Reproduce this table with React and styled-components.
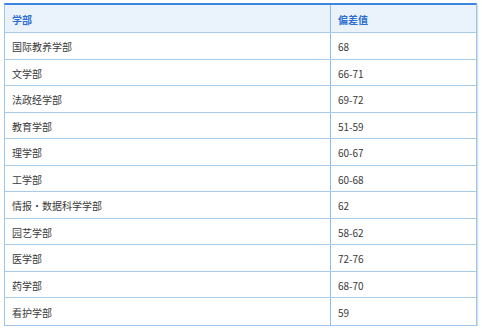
import React from "react";
import styled, { createGlobalStyle } from "styled-components";

const Global = createGlobalStyle`
  html, body { margin: 0; padding: 0; background: #fff; }
  body { font-family: "Noto Sans CJK SC", "Noto Sans", sans-serif; }
`;

const Table = styled.div`
  width: 473px;
  margin: 3px 0 0 4px;
  border: 1px solid #9fc6ea;
  border-top: 2px solid #3d86e0;
  box-sizing: border-box;
  box-shadow: 1px 1px 1px rgba(120, 170, 220, 0.35);
`;

const Row = styled.div`
  display: grid;
  grid-template-columns: 326px 1fr;
  height: ${(p) => (p.$head ? "28px" : "26.5px")};
  box-sizing: border-box;
  background: ${(p) => (p.$head ? "#eaf2fc" : "#fff")};
  border-bottom: ${(p) => (p.$last ? "none" : "1px solid #a9cbeb")};
`;

const Cell = styled.div`
  display: flex;
  align-items: center;
  padding: 2px 0 0 7px;
  box-sizing: border-box;
  font-size: 10px;
  color: ${(p) => (p.$head ? "#2d6fd3" : "#3a3a3a")};
  font-weight: ${(p) => (p.$head ? 700 : 400)};
  border-right: ${(p) => (p.$first ? "1px solid #8fbde6" : "none")};
  white-space: nowrap;
`;

const rows = [
  ["国际教养学部", "68"],
  ["文学部", "66-71"],
  ["法政经学部", "69-72"],
  ["教育学部", "51-59"],
  ["理学部", "60-67"],
  ["工学部", "60-68"],
  ["情报・数据科学学部", "62"],
  ["园艺学部", "58-62"],
  ["医学部", "72-76"],
  ["药学部", "68-70"],
  ["看护学部", "59"],
];

export default function App() {
  return (
    <>
      <Global />
      <Table>
        <Row $head>
          <Cell $head $first>学部</Cell>
          <Cell $head>偏差值</Cell>
        </Row>
        {rows.map(([a, b], i) => (
          <Row key={a} $last={i === rows.length - 1}>
            <Cell $first>{a}</Cell>
            <Cell>{b}</Cell>
          </Row>
        ))}
      </Table>
    </>
  );
}
